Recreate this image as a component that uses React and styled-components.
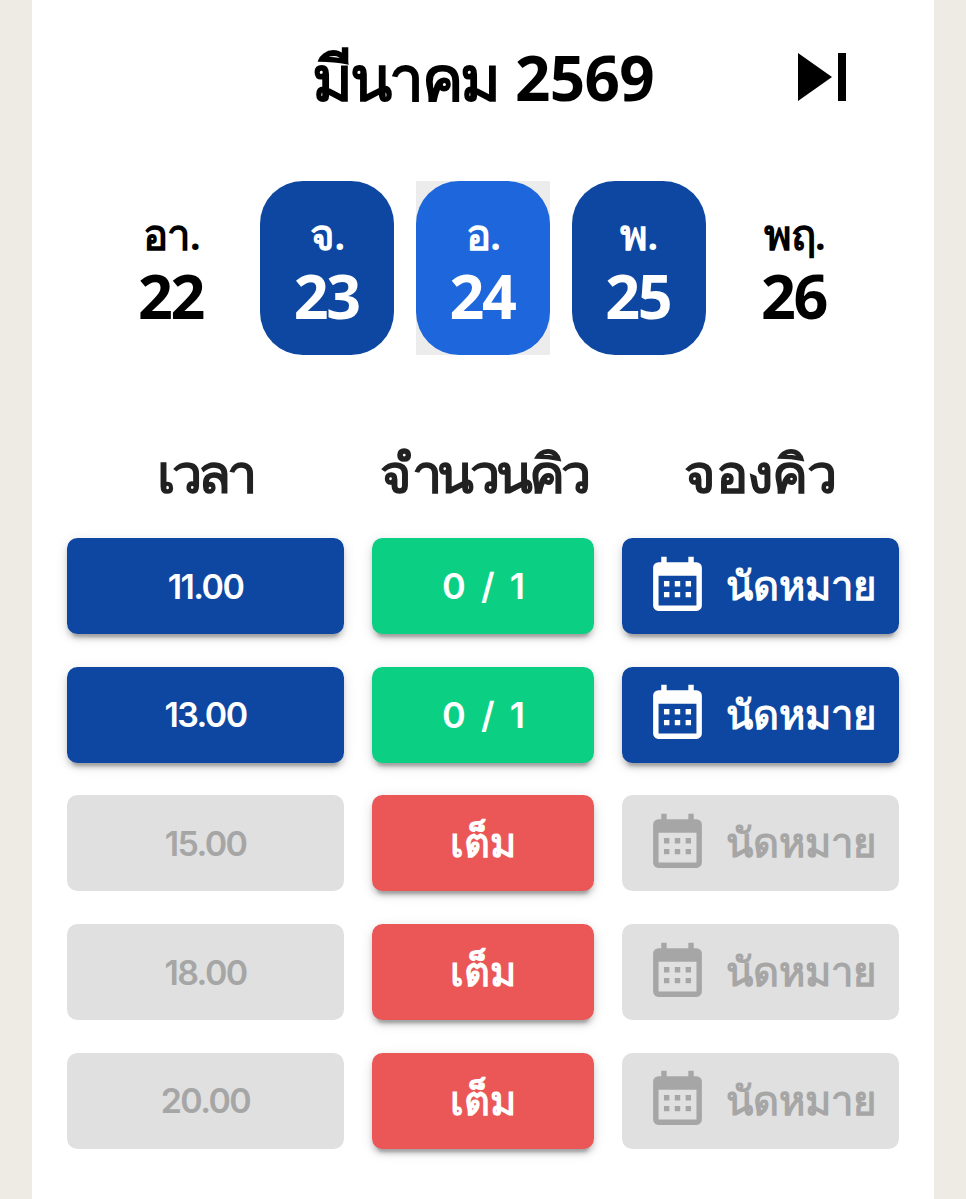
import styled, { createGlobalStyle, css } from "styled-components";

const GlobalStyle = createGlobalStyle`
  * {
    box-sizing: border-box;
  }
  body {
    margin: 0;
    background: #eeebe4;
    font-family: "Noto Sans", sans-serif;
    font-weight: 600;
  }
`

const Page = styled.main`
  width: 902px;
  height: 1199px;
  margin: 0 auto;
  padding: 29px 35px 0;
  background: #fff;
  overflow: hidden;
`

const Header = styled.header`
  display: grid;
  grid-template-columns: 96px 1fr 96px;
  height: 96px;
  padding: 0 29px;
`

const Title = styled.h1`
  display: flex;
  justify-content: center;
  align-items: baseline;
  grid-column: 2;
  gap: 17px;
  margin: 0;
  color: #000;
  font-size: 62px;
  font-weight: 600;
  line-height: 96px;
  white-space: nowrap;
`

const Month = styled.span`
  letter-spacing: -2.8px;
`

const Year = styled.span`
  font-weight: 700;
  letter-spacing: -0.7px;
`

const IconButton = styled.button`
  width: 96px;
  height: 96px;
  padding: 0;
  border: 0;
  background: none;
  svg {
    display: block;
    width: 96px;
    height: 96px;
  }
`

const Days = styled.div`
  display: flex;
  justify-content: center;
  gap: 21.75px;
  margin-top: 56px;
`

const dayColors = {
  open: "#0d47a1",
  selected: "#1e66db",
  closed: "transparent",
}

const DayCell = styled.div`
  width: 134px;
  height: 174px;
  background: ${props => props.$state === "selected" ? "#ececec" : "transparent"};
`

const Day = styled.button`
  display: flex;
  flex-direction: column;
  align-items: center;
  width: 100%;
  height: 100%;
  padding: 24px 0 0;
  border: 0;
  border-radius: 43px;
  background: ${props => dayColors[props.$state]};
  color: ${props => props.$state === "closed" ? "#000" : "#fff"};
  font-family: inherit;
`

const DayName = styled.span`
  font-size: 42px;
  font-weight: 600;
  line-height: 58px;
  letter-spacing: -1.4px;
`

const DayNumber = styled.span`
  font-size: 61px;
  font-weight: 700;
  line-height: 65px;
  letter-spacing: -2.5px;
  margin-left: -2px;
`

const columns = css`
  display: grid;
  grid-template-columns: 277px 221.5px 277px;
  column-gap: 28.25px;
`

const TableHead = styled.div`
  ${columns}
  height: 89px;
  margin-top: 94px;
  color: #212121;
`

const HeadCell = styled.div`
  font-size: 54px;
  line-height: 46px;
  letter-spacing: ${props => props.$tracking}px;
  text-align: center;
  white-space: nowrap;
`

const Slots = styled.div`
  ${columns}
  row-gap: 32.7px;
`

const slotColors = {
  blue: "#0d47a1",
  green: "#0bd084",
  red: "#eb5757",
  disabled: "#e0e0e0",
}

const SlotButton = styled.button`
  display: flex;
  justify-content: center;
  align-items: center;
  height: 96px;
  padding: 0;
  border: 0;
  border-radius: 10.5px;
  background: ${props => slotColors[props.$color]};
  color: ${props => props.$color === "disabled" ? "#a6a6a6" : "#fff"};
  font-family: inherit;
  font-size: 40px;
  font-weight: 600;
  white-space: nowrap;
  ${props => props.$color !== "disabled" && css`
    box-shadow: 0 8px 3px -5px rgba(0, 0, 0, 0.2), 0 5px 5px rgba(0, 0, 0, 0.14), 0 3px 13px rgba(0, 0, 0, 0.12);
  `}
`

const Time = styled(SlotButton)`
  font-family: Inter, sans-serif;
  font-size: 34px;
  letter-spacing: -1.6px;
`

const Queue = styled(SlotButton)`
  ${props => props.$color === "green" && css`
    padding-left: 4px;
    font-family: Inter, sans-serif;
    font-size: 36px;
    letter-spacing: 3px;
  `}
`

const Book = styled(SlotButton)`
  justify-content: flex-start;
  gap: 16px;
  padding-left: 23px;
  svg {
    flex: none;
    width: 65px;
    height: 65px;
  }
`

const days = [
  { name: "อา.", number: 22, state: "closed" },
  { name: "จ.", number: 23, state: "open" },
  { name: "อ.", number: 24, state: "selected" },
  { name: "พ.", number: 25, state: "open" },
  { name: "พฤ.", number: 26, state: "closed" },
]

const slots = [
  { time: "11.00", full: false },
  { time: "13.00", full: false },
  { time: "15.00", full: true },
  { time: "18.00", full: true },
  { time: "20.00", full: true },
]

function SkipNext() {
  return (
    <svg viewBox="0 0 24 24" fill="currentColor">
      <path d="M16,18H18V6H16M6,18L14.5,12L6,6V18Z" />
    </svg>
  )
}

function CalendarMonth() {
  return (
    <svg viewBox="0 0 24 24" fill="currentColor">
      <path d="M9,10V12H7V10H9M13,10V12H11V10H13M17,10V12H15V10H17M19,3A2,2 0 0,1 21,5V19A2,2 0 0,1 19,21H5C3.89,21 3,20.1 3,19V5A2,2 0 0,1 5,3H6V1H8V3H16V1H18V3H19M19,19V8H5V19H19M9,14V16H7V14H9M13,14V16H11V14H13M17,14V16H15V14H17Z" />
    </svg>
  )
}

function Slot({ time, full }) {
  const color = full ? "disabled" : "blue"
  return (
    <>
      <Time $color={color}>{time}</Time>
      <Queue $color={full ? "red" : "green"}>{full ? "เต็ม" : "0 / 1"}</Queue>
      <Book $color={color}><CalendarMonth /><span>นัดหมาย</span></Book>
    </>
  )
}

function App() {
  return (
    <Page>
      <GlobalStyle />
      <Header>
        <Title><Month>มีนาคม</Month><Year>2569</Year></Title>
        <IconButton><SkipNext /></IconButton>
      </Header>
      <Days>
        {days.map(day => (
          <DayCell key={day.number} $state={day.state}>
            <Day $state={day.state}>
              <DayName>{day.name}</DayName>
              <DayNumber>{day.number}</DayNumber>
            </Day>
          </DayCell>
        ))}
      </Days>
      <TableHead>
        <HeadCell $tracking={-3.6}>เวลา</HeadCell>
        <HeadCell $tracking={-4.2}>จำนวนคิว</HeadCell>
        <HeadCell $tracking={-0.8}>จองคิว</HeadCell>
      </TableHead>
      <Slots>
        {slots.map(slot => <Slot key={slot.time} {...slot} />)}
      </Slots>
    </Page>
  )
}

export default App
